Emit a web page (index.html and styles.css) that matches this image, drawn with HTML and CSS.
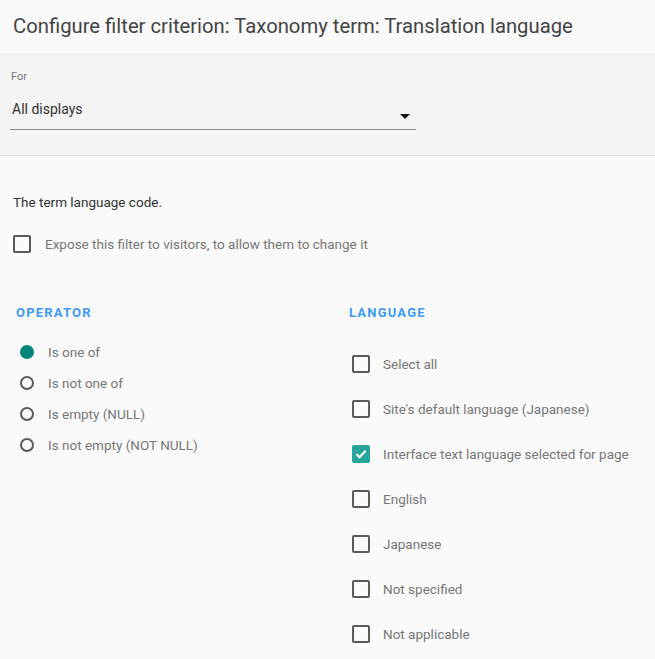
FILE: index.html
```html
<!DOCTYPE html>
<html lang="en">
<head>
    <meta charset="UTF-8">
    <title>Configure filter criterion</title>

    <link rel="stylesheet" href="styles.css">

</head>
<body>
  <header class="dialog_title">
    <h1>Configure filter criterion: Taxonomy term: Translation language</h1>
  </header>

  <div class="display_bar">
    <label class="small_label">For</label>
    <div class="select">
      <span>All displays</span>
      <span class="arrow"></span>
    </div>
  </div>

  <div class="content">
    <p class="description">The term language code.</p>

    <div class="check_row expose">
      <span class="box"></span>
      <span class="text">Expose this filter to visitors, to allow them to change it</span>
    </div>

    <div class="columns">
      <div class="column">
        <h2>Operator</h2>
        <div class="radios">
          <div class="radio_row"><span class="dot checked"></span><span class="text">Is one of</span></div>
          <div class="radio_row"><span class="dot"></span><span class="text">Is not one of</span></div>
          <div class="radio_row"><span class="dot"></span><span class="text">Is empty (NULL)</span></div>
          <div class="radio_row"><span class="dot"></span><span class="text">Is not empty (NOT NULL)</span></div>
        </div>
      </div>

      <div class="column">
        <h2>Language</h2>
        <div class="checks">
          <div class="check_row"><span class="box"></span><span class="text">Select all</span></div>
          <div class="check_row"><span class="box"></span><span class="text">Site's default language (Japanese)</span></div>
          <div class="check_row">
            <span class="box checked">
              <svg width="18" height="18" viewBox="0 0 18 18"><path d="M4.5 9.2 L7.6 12.2 L13.6 5.8" fill="none" stroke="#ffffff" stroke-width="2.2"/></svg>
            </span>
            <span class="text">Interface text language selected for page</span>
          </div>
          <div class="check_row"><span class="box"></span><span class="text">English</span></div>
          <div class="check_row"><span class="box"></span><span class="text">Japanese</span></div>
          <div class="check_row"><span class="box"></span><span class="text">Not specified</span></div>
          <div class="check_row"><span class="box"></span><span class="text">Not applicable</span></div>
        </div>
      </div>
    </div>
  </div>

</body>
</html>
```

FILE: styles.css
```css
body {
  margin: 0;
  background: #fafafa;
  font-family: Roboto, "Liberation Sans", sans-serif;
  font-size: 13.5px;
  color: #333333;
}

.dialog_title {
  height: 53px;
  padding: 0 13px;
}

.dialog_title h1 {
  margin: 0;
  font-size: 20.25px;
  font-weight: normal;
  line-height: 53px;
  color: #444444;
}

.display_bar {
  background: #f4f4f4;
  border-bottom: 1px solid #e0e0e0;
  padding: 17px 10px 25px 10px;
}

.small_label {
  display: block;
  font-size: 11px;
  line-height: 14px;
  color: #777777;
  padding-left: 1px;
}

.select {
  display: flex;
  justify-content: space-between;
  align-items: center;
  width: 406px;
  height: 39px;
  margin-top: 6px;
  border-bottom: 1px solid #8a8a8a;
  line-height: 20px;
  font-size: 14px;
  color: #333333;
}

.select span:first-child {
  padding-left: 2px;
  margin-top: -1px;
}

.select .arrow {
  width: 0;
  height: 0;
  margin-right: 6px;
  margin-top: 13px;
  border-left: 5px solid transparent;
  border-right: 5px solid transparent;
  border-top: 5px solid #111111;
}

.content {
  padding: 36px 13px 0 13px;
}

.description {
  margin: 0;
  line-height: 20px;
}

.check_row {
  display: flex;
  align-items: center;
  gap: 14px;
  color: #777777;
}

.expose {
  margin-top: 23px;
  height: 18px;
}

.box {
  width: 14px;
  height: 14px;
  border: 2px solid #5a5a5a;
  border-radius: 2px;
  flex-shrink: 0;
  position: relative;
}

.box.checked {
  background: #26a69a;
  border-color: #26a69a;
}

.box svg {
  position: absolute;
  left: -2px;
  top: -2px;
}

.columns {
  display: grid;
  grid-template-columns: 333px 1fr;
  margin-top: 50px;
  padding-left: 3px;
}

.column h2 {
  margin: 0;
  font-size: 13px;
  font-weight: bold;
  letter-spacing: 1.2px;
  line-height: 20px;
  text-transform: uppercase;
  color: #3d9bf5;
}

.radios {
  margin-top: 13px;
}

.radio_row {
  display: flex;
  align-items: center;
  gap: 14px;
  height: 31px;
  padding-left: 4px;
  color: #777777;
}

.dot {
  width: 10px;
  height: 10px;
  border: 2px solid #5a5a5a;
  border-radius: 50%;
  flex-shrink: 0;
}

.dot.checked {
  background: #00897b;
  border-color: #00897b;
}

.checks {
  margin-top: 18px;
}

.checks .check_row {
  height: 45px;
  padding-left: 3px;
  gap: 13px;
}
```
